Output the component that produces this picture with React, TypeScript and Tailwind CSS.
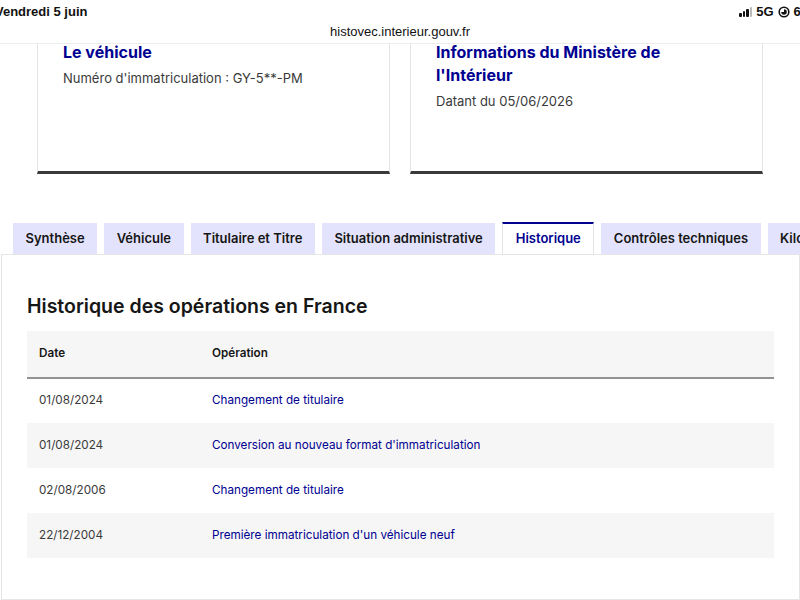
const tabs = [
  'Synthèse',
  'Véhicule',
  'Titulaire et Titre',
  'Situation administrative',
  'Historique',
  'Contrôles techniques',
  'Kilométrage',
];

const operations = [
  { date: '01/08/2024', label: 'Changement de titulaire' },
  { date: '01/08/2024', label: "Conversion au nouveau format d'immatriculation" },
  { date: '02/08/2006', label: 'Changement de titulaire' },
  { date: '22/12/2004', label: "Première immatriculation d'un véhicule neuf" },
];

function StatusBar() {
  return (
    <div className="bg-white h-[43px] font-['Liberation_Sans',sans-serif] text-[#111]">
      <div className="flex items-center justify-between h-[24px]">
        <span className="text-[13px] font-bold -ml-[5px]">Vendredi 5 juin</span>
        <div className="flex items-center gap-1 text-[13px] font-bold -mr-[8px]">
          {/* signal */}
          <div className="flex items-end gap-[1px] h-[10px]">
            <span className="w-[2.5px] h-[4px] bg-[#111] rounded-[1px]" />
            <span className="w-[2.5px] h-[6px] bg-[#111] rounded-[1px]" />
            <span className="w-[2.5px] h-[8px] bg-[#111] rounded-[1px]" />
            <span className="w-[2.5px] h-[10px] bg-[#bbb] rounded-[1px]" />
          </div>
          <span>5G</span>
          <svg width="12" height="12" viewBox="0 0 12 12">
            <circle cx="6" cy="6" r="4.8" fill="none" stroke="#111" strokeWidth="1.6" />
            <path d="M6 3.2 A2.8 2.8 0 1 1 3.2 6 L6 6 Z" fill="#111" />
          </svg>
          <span>63</span>
        </div>
      </div>
      <div className="text-center text-[13px] leading-[16px]">histovec.interieur.gouv.fr</div>
    </div>
  );
}

function InfoCard({ title, sub }: { title: React.ReactNode; sub: string }) {
  return (
    <div className="bg-white border-x border-[#e5e5e5] border-b-[3px] border-b-[#3a3a3a] h-[130px] pl-[25px] pr-4">
      <h2 className="text-[16px] leading-[23px] font-bold text-[#000091] -mt-[3px]">{title}</h2>
      <p className="text-[13px] leading-[20px] text-[#3a3a3a] mt-[4px]">{sub}</p>
    </div>
  );
}

export default function App() {
  return (
    <div className="w-[800px] h-[600px] overflow-hidden bg-white font-['Inter',sans-serif] text-[#161616]">
      <StatusBar />
      <div className="border-t border-[#ececec]">
        <div className="grid grid-cols-2 gap-[20px] px-[37px]">
          <InfoCard title="Le véhicule" sub="Numéro d'immatriculation : GY-5**-PM" />
          <InfoCard
            title={
              <>
                Informations du Ministère de
                <br />
                l'Intérieur
              </>
            }
            sub="Datant du 05/06/2026"
          />
        </div>
      </div>

      {/* Tabs */}
      <div className="mt-[48px] flex gap-[7px] pl-[13px] whitespace-nowrap">
        {tabs.map((t) =>
          t === 'Historique' ? (
            <div
              key={t}
              className="h-[32px] px-[12.5px] flex items-center bg-white border-t-2 border-[#000091] border-x border-x-[#e5e5e5] text-[13px] font-semibold text-[#000091] -mb-px relative z-10 shrink-0"
            >
              {t}
            </div>
          ) : (
            <div
              key={t}
              className="h-[31px] mt-[1px] px-[12.5px] flex items-center bg-[#e3e3fd] text-[13px] font-semibold text-[#161616] shrink-0"
            >
              {t}
            </div>
          )
        )}
      </div>

      {/* Panel */}
      <div className="border border-[#e5e5e5] ml-[1px] h-[346px] pt-[37px] px-[25px]">
        <h3 className="text-[19.5px] leading-[28px] font-semibold text-[#161616]">
          Historique des opérations en France
        </h3>
        <table className="w-full mt-[11px] text-[11.7px] border-collapse">
          <thead>
            <tr className="bg-[#f6f6f6] h-[47px] border-b-2 border-[#929292]">
              <th className="text-left font-semibold pl-[12px] w-[185px]">Date</th>
              <th className="text-left font-semibold">Opération</th>
            </tr>
          </thead>
          <tbody>
            {operations.map((op, i) => (
              <tr key={i} className={i % 2 === 1 ? 'bg-[#f6f6f6] h-[45px]' : 'bg-white h-[45px]'}>
                <td className="pl-[12px] text-[#3a3a3a]">{op.date}</td>
                <td className="text-[#000091]">{op.label}</td>
              </tr>
            ))}
          </tbody>
        </table>
      </div>
    </div>
  );
}
